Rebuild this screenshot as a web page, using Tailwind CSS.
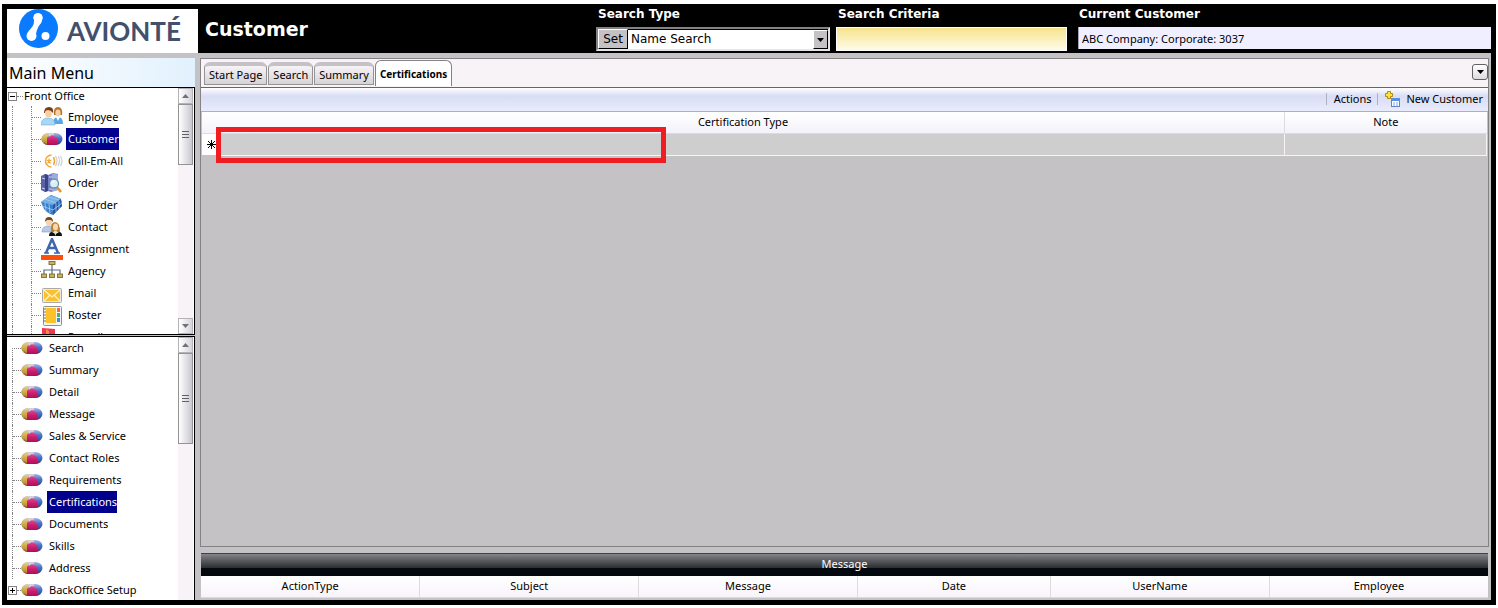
<!DOCTYPE html>
<html lang="en">
<head>
    <meta charset="UTF-8">
    <meta name="viewport" content="width=device-width, initial-scale=1.0">
    <title>Customer - Certifications</title>
    <script src="https://cdn.jsdelivr.net/npm/@tailwindcss/browser@4"></script>
</head>
<body class="bg-white font-['Noto_Sans',sans-serif] text-[11px] leading-4 text-black">
    <!-- Icon sprites -->
    <svg class="absolute size-0">
        <defs>
            <linearGradient id="gold" x1="0" y1="0" x2="0" y2="1"><stop offset="0" stop-color="#e8d8a8"/><stop offset=".5" stop-color="#d2a944"/><stop offset="1" stop-color="#a87f2c"/></linearGradient>
            <linearGradient id="pink" x1="0" y1="0" x2="0" y2="1"><stop offset="0" stop-color="#d94f8e"/><stop offset=".5" stop-color="#cc1a6d"/><stop offset="1" stop-color="#a80f50"/></linearGradient>
            <linearGradient id="blue" x1="0" y1="0" x2="0" y2="1"><stop offset="0" stop-color="#b9c6ea"/><stop offset=".45" stop-color="#4a72c8"/><stop offset="1" stop-color="#2b3f86"/></linearGradient>
            <clipPath id="pillClip"><rect x="0.500" y="5" width="21" height="12" rx="7" ry="6"/></clipPath>
        </defs>
        <symbol id="pill" viewBox="0 0 22 22">
            <g clip-path="url(#pillClip)">
                <rect x="0" y="4" width="22" height="14" fill="url(#blue)"/>
                <path d="M0 4h10L6 10v8H0z" fill="url(#gold)"/>
                <path d="M7 4h7l-2 4-4 2z" fill="#d9cdd8"/>
                <path d="M6 10l5-3 5 3 1 3-2 5H6z" fill="url(#pink)"/>
                <path d="M1 15l5 2v1H1z" fill="#8b2a52"/>
                <path d="M3 14q8 6 16 0v4H3z" fill="#8a1048" opacity=".35"/>
            </g>
        </symbol>
        <symbol id="people" viewBox="0 0 22 22">
            <path d="M12 18q0-7 5-7t5 7z" fill="#58a6e8"/>
            <path d="M13 9q-1-8 4-8t4 8z" fill="#b5762c"/>
            <ellipse cx="17" cy="7" rx="2.6" ry="3.4" fill="#f6cfa6"/>
            <path d="M15 11h4l-2 4z" fill="#fff"/>
            <path d="M0 19q0-7 7-7t7 7z" fill="#a9d6f3" stroke="#6fb2df" stroke-width=".6"/>
            <ellipse cx="7.500" cy="7" rx="3.300" ry="4.500" fill="#f6cfa6"/>
            <path d="M3 7Q3 1 8 1t4 6q-2-3-5-3T4 7z" fill="#7a3b16"/>
        </symbol>
        <symbol id="call" viewBox="0 0 22 22">
            <path d="M10.500 5A6 6 0 1 0 10.500 17M12.500 7q2 4 0 8" fill="none" stroke="#f6a733" stroke-width="1.500"/>
            <path d="M8 8.500v2.500M8 11l-2.500-1M8 11l2.500-1M8 11l-1.500 2.500M8 11l1.500 2.500" fill="none" stroke="#f6a733" stroke-width="1.200"/>
            <path d="M14.500 6q3 5 0 10M17 6q3 5 0 10M19.500 6q3 5 0 10" fill="none" stroke="#cfcfcf" stroke-width="1.200"/>
        </symbol>
        <symbol id="order" viewBox="0 0 22 22">
            <path d="M0 4l4-2 3 1v16l-3 1-4-2z" fill="#5a63a8"/><path d="M4 2l3 1v16l-3 1z" fill="#3b4385"/>
            <path d="M7 3l5-2 5 1v16l-7 2-3-1z" fill="#747dc2"/><path d="M11 1.500l6 1V18l-6 1.500z" fill="#a3aadd"/>
            <path d="M1 6l3 1M1 16l3 1M8 5h3M8 17h3" stroke="#cfd5f2"/>
            <path d="M16 15l4 5" stroke="#d9972d" stroke-width="2.500"/>
            <circle cx="13" cy="11.500" r="4.500" fill="#d5f0fb" stroke="#6b8fae" stroke-width="1.300"/>
            <path d="M11 11q1-2 3-2" fill="none" stroke="#fff"/>
        </symbol>
        <symbol id="cube" viewBox="0 0 22 22">
            <path d="M10 1l10 4 1 7-9 9q-6-2-9-6L0 8z" fill="#3b7fcb"/>
            <path d="M10 1l10 4-8 6L0 8z" fill="#76afe6"/><path d="M12 11l8-6 1 7-9 9z" fill="#2558a8"/>
            <path d="M4 5l11 4M7 3l11 3M4 9l1 8M8 10l1 9M15 9v9M18 7v8M1 12l11 4 9-7" stroke="#a8d0f3" stroke-width=".8" fill="none"/>
        </symbol>
        <symbol id="contact" viewBox="0 0 22 22">
            <path d="M1 16q0-6 6-6t6 6z" fill="#b9c8e6" stroke="#8799c2" stroke-width=".6"/>
            <ellipse cx="8" cy="6" rx="3" ry="4" fill="#f6d3ae"/><path d="M4 6q0-5 4-5t4 5l-2-2H6z" fill="#6e4a22"/>
            <path d="M10 16q-1-10 4-10t5 10z" fill="#b98432"/><ellipse cx="14.500" cy="11" rx="2.500" ry="3.500" fill="#f9d7b0"/>
            <path d="M8 20q0-4 3-4l3.500 2 3.500-2q3 0 3 4z" fill="#111"/><path d="M13 15h3l-1.500 5z" fill="#f9d7b0"/>
        </symbol>
        <symbol id="assign" viewBox="0 0 22 22">
            <path d="M5 15L11 1l6 14M7.500 10h8" fill="none" stroke="#3d66ae" stroke-width="2.500"/>
            <path d="M3 15h5M13 15h6" stroke="#3d66ae" stroke-width="1.500"/>
            <rect y="17" width="22" height="5" fill="#fb4f0a"/>
        </symbol>
        <symbol id="agency" viewBox="0 0 22 22">
            <path d="M11 5v11M3 14v-4h16v4" stroke="#5b6b8c" fill="none" stroke-width="1.200"/>
            <g fill="#cbb35c" stroke="#7a6a35" stroke-width=".9"><rect x="8" y="1.500" width="6" height="3"/><rect x=".5" y="14" width="5" height="3.500"/><rect x="8.500" y="14" width="5" height="3.500"/><rect x="16.500" y="14" width="5" height="3.500"/></g>
        </symbol>
        <symbol id="email" viewBox="0 0 22 22">
            <rect x="1.500" y="6.500" width="19" height="14" rx="1" fill="#e9e9e9" stroke="#a9a9a9"/>
            <rect x="3" y="8" width="16" height="11" fill="#fbc02c"/>
            <path d="M3 8l8 7 8-7M3 19l6-6M19 19l-6-6" fill="none" stroke="#fff3c4" stroke-width="1.300"/>
        </symbol>
        <symbol id="roster" viewBox="0 0 22 22">
            <rect x="2.500" y="2.500" width="18" height="19" rx="1" fill="#f4f4f4" stroke="#8f8f8f"/>
            <rect x="5" y="4" width="10" height="15" fill="#fdc22b"/>
            <path d="M2 5h3M2 8h3M2 11h3M2 14h3M2 17h3" stroke="#777"/>
            <path d="M16 4h3v4h-3z" fill="#f26c3a"/><path d="M16 9h3v4h-3z" fill="#4fb648"/><path d="M16 14h3v4h-3z" fill="#2f8fe0"/>
        </symbol>
        <symbol id="payroll" viewBox="0 0 22 22"><path d="M1 2l13 1v17H1z" fill="#f0355c"/><path d="M5 3l3 2v14H5z" fill="#f98a3c"/></symbol>
    </svg>

    <div class="flex h-screen min-h-[608px] flex-col px-[2px] pt-1 pb-[3px]">
        <div class="flex min-h-0 flex-1 flex-col border-x-[5px] border-b-[5px] border-black bg-[#c5c2c5]">
            <!-- Header -->
            <header class="flex h-[49px] shrink-0 bg-black font-['DejaVu_Sans',sans-serif]">
                <div class="mt-[5px] flex w-[191px] shrink-0 items-center bg-white pl-3">
                    <svg class="-mt-[4px] size-10 shrink-0" viewBox="0 0 40 40">
                        <circle cx="19.500" cy="19.500" r="19.500" fill="#0a7bff"/>
                        <path d="M14.500 8h9q0 5-3 8-3 4-4 12l-8 1q-1-6 3-9 5-5 3-12z" fill="#fff"/>
                        <circle cx="19" cy="8.500" r="4.600" fill="#fff"/><circle cx="12.500" cy="27" r="5" fill="#fff"/><circle cx="26.500" cy="27" r="4" fill="#fff"/>
                    </svg>
                    <span class="ml-2 font-['Lato',sans-serif] text-[26px] leading-8 font-bold text-[#43506c]">AVIONTÉ</span>
                </div>
                <h1 class="w-[398px] shrink-0 pt-[9px] pl-[7px] text-[19px] leading-8 font-bold text-white">Customer</h1>
                <div class="w-[234px] shrink-0 pt-[2px]">
                    <label for="searchType" class="block h-[21px] pl-[2px] text-[12px] leading-[17px] font-bold text-white">Search Type</label>
                    <div class="flex h-6 border-2 border-t-[#848284] border-r-[#e7e3e7] border-b-[#e7e3e7] border-l-[#848284] bg-white text-[12px]">
                        <button type="button" class="w-[30px] border border-t-white border-r-black border-b-black border-l-white bg-[#c5c2c5]">Set</button>
                        <div class="relative flex-1">
                            <select id="searchType" class="h-full w-full appearance-none border-t border-black pb-px pl-[3px]"><option>Name Search</option></select>
                            <span class="pointer-events-none absolute top-px right-0 flex h-[19px] w-[15px] items-center justify-center border border-t-white border-r-black border-b-black border-l-white bg-[#c5c2c5]">
                                <svg class="h-1 w-[7px]" viewBox="0 0 7 4"><path d="M0 0h7L3.500 4z"/></svg>
                            </span>
                        </div>
                    </div>
                </div>
                <div class="ml-[6px] w-[231px] shrink-0 pt-[2px]">
                    <label for="criteria" class="block h-[21px] pl-[2px] text-[12px] leading-[17px] font-bold text-white">Search Criteria</label>
                    <input id="criteria" type="text" class="block h-6 w-full border border-white bg-linear-to-b from-[#f7e38c] to-[#fffbe7] px-1 text-[12px]">
                </div>
                <div class="ml-[11px] min-w-0 flex-1 pt-[2px]">
                    <label for="current" class="block h-[21px] pl-px text-[12px] leading-4 font-bold text-white">Current Customer</label>
                    <input id="current" type="text" readonly value="ABC Company: Corporate: 3037" class="block h-[22px] w-full border-l border-[#a5a2b5] bg-[#efefff] pl-[3px] font-['Noto_Sans',sans-serif] text-[11px]">
                </div>
            </header>

            <div class="flex min-h-0 flex-1 pt-[5px]">
                <!-- Navigation -->
                <aside class="flex w-[188px] shrink-0 flex-col">
                    <h2 class="h-[29px] shrink-0 bg-linear-to-r from-white to-[#e1f1fd] pl-[2px] text-[16px] leading-[30px]">Main Menu</h2>
                    <nav class="flex h-[248px] shrink-0 border-y border-r border-black bg-white">
                        <ul class="min-w-0 flex-1 overflow-hidden">
                            <li class="flex h-[18px] items-center pb-[2px]">
                                <button type="button" aria-label="Collapse" class="ml-px flex size-[9px] items-center justify-center border border-[#848284]"><span class="h-px w-[5px] bg-black"></span></button>
                                <span class="w-[6px] border-t border-dotted border-[#848284]"></span>
                                <span class="pl-px">Front Office</span>
                            </li>
                            <li class="ml-[5px] flex h-[22px] items-center border-l border-dotted border-[#848284] pl-[18px]"><span class="flex h-full w-[10px] items-center border-l border-dotted border-[#848284]"><span class="w-full border-t border-dotted border-[#848284]"></span></span><svg class="size-[22px]"><use href="#people"/></svg><a href="#" class="ml-[3px] px-[2px] leading-[22px]">Employee</a></li>
                            <li class="ml-[5px] flex h-[22px] items-center border-l border-dotted border-[#848284] pl-[18px]"><span class="flex h-full w-[10px] items-center border-l border-dotted border-[#848284]"><span class="w-full border-t border-dotted border-[#848284]"></span></span><svg class="size-[22px]"><use href="#pill"/></svg><a href="#" class="ml-[3px] bg-[#00008c] pl-[2px] leading-[22px] text-white">Customer</a></li>
                            <li class="ml-[5px] flex h-[22px] items-center border-l border-dotted border-[#848284] pl-[18px]"><span class="flex h-full w-[10px] items-center border-l border-dotted border-[#848284]"><span class="w-full border-t border-dotted border-[#848284]"></span></span><svg class="size-[22px]"><use href="#call"/></svg><a href="#" class="ml-[3px] px-[2px] leading-[22px]">Call-Em-All</a></li>
                            <li class="ml-[5px] flex h-[22px] items-center border-l border-dotted border-[#848284] pl-[18px]"><span class="flex h-full w-[10px] items-center border-l border-dotted border-[#848284]"><span class="w-full border-t border-dotted border-[#848284]"></span></span><svg class="size-[22px]"><use href="#order"/></svg><a href="#" class="ml-[3px] px-[2px] leading-[22px]">Order</a></li>
                            <li class="ml-[5px] flex h-[22px] items-center border-l border-dotted border-[#848284] pl-[18px]"><span class="flex h-full w-[10px] items-center border-l border-dotted border-[#848284]"><span class="w-full border-t border-dotted border-[#848284]"></span></span><svg class="size-[22px]"><use href="#cube"/></svg><a href="#" class="ml-[3px] px-[2px] leading-[22px]">DH Order</a></li>
                            <li class="ml-[5px] flex h-[22px] items-center border-l border-dotted border-[#848284] pl-[18px]"><span class="flex h-full w-[10px] items-center border-l border-dotted border-[#848284]"><span class="w-full border-t border-dotted border-[#848284]"></span></span><svg class="size-[22px]"><use href="#contact"/></svg><a href="#" class="ml-[3px] px-[2px] leading-[22px]">Contact</a></li>
                            <li class="ml-[5px] flex h-[22px] items-center border-l border-dotted border-[#848284] pl-[18px]"><span class="flex h-full w-[10px] items-center border-l border-dotted border-[#848284]"><span class="w-full border-t border-dotted border-[#848284]"></span></span><svg class="size-[22px]"><use href="#assign"/></svg><a href="#" class="ml-[3px] px-[2px] leading-[22px]">Assignment</a></li>
                            <li class="ml-[5px] flex h-[22px] items-center border-l border-dotted border-[#848284] pl-[18px]"><span class="flex h-full w-[10px] items-center border-l border-dotted border-[#848284]"><span class="w-full border-t border-dotted border-[#848284]"></span></span><svg class="size-[22px]"><use href="#agency"/></svg><a href="#" class="ml-[3px] px-[2px] leading-[22px]">Agency</a></li>
                            <li class="ml-[5px] flex h-[22px] items-center border-l border-dotted border-[#848284] pl-[18px]"><span class="flex h-full w-[10px] items-center border-l border-dotted border-[#848284]"><span class="w-full border-t border-dotted border-[#848284]"></span></span><svg class="size-[22px]"><use href="#email"/></svg><a href="#" class="ml-[3px] px-[2px] leading-[22px]">Email</a></li>
                            <li class="ml-[5px] flex h-[22px] items-center border-l border-dotted border-[#848284] pl-[18px]"><span class="flex h-full w-[10px] items-center border-l border-dotted border-[#848284]"><span class="w-full border-t border-dotted border-[#848284]"></span></span><svg class="size-[22px]"><use href="#roster"/></svg><a href="#" class="ml-[3px] px-[2px] leading-[22px]">Roster</a></li>
                            <li class="ml-[5px] flex h-[22px] items-center border-l border-dotted border-[#848284] pl-[18px]"><span class="flex h-full w-[10px] items-center border-l border-dotted border-[#848284]"><span class="w-full border-t border-dotted border-[#848284]"></span></span><svg class="size-[22px]"><use href="#payroll"/></svg><a href="#" class="ml-[3px] px-[2px] leading-[22px]">Payroll</a></li>
                        </ul>
                        <div class="mr-px flex w-[15px] shrink-0 flex-col bg-[#f7f3f7]">
                            <button type="button" aria-label="Scroll up" class="flex h-4 items-center justify-center border border-[#b5b2b5] bg-linear-to-r from-white to-[#d6d3de]"><svg class="h-1 w-[7px]" viewBox="0 0 7 4"><path d="M0 4h7L3.500 0z" fill="#737173"/></svg></button>
                            <div class="flex h-[61px] items-center justify-center border border-[#949294] bg-linear-to-r from-white to-[#c9c8d2]"><span class="h-2 w-[7px] bg-[repeating-linear-gradient(#636163_0_1px,transparent_1px_3px)]"></span></div>
                            <button type="button" aria-label="Scroll down" class="mt-auto flex h-4 items-center justify-center border border-[#b5b2b5] bg-linear-to-r from-white to-[#d6d3de]"><svg class="h-1 w-[7px]" viewBox="0 0 7 4"><path d="M0 0h7L3.500 4z" fill="#737173"/></svg></button>
                        </div>
                    </nav>
                    <nav class="mt-px flex min-h-0 flex-1 border-t border-r border-black bg-white">
                        <ul class="min-w-0 flex-1 overflow-hidden">
                            <li class="flex h-[22px] items-center pl-[5px]"><span class="h-[11px] w-[9px] self-end border-t border-l border-dotted border-[#848284]"></span><svg class="size-[22px]"><use href="#pill"/></svg><a href="#" class="ml-[4px] px-[2px] leading-[22px]">Search</a></li>
                            <li class="ml-[5px] flex h-[22px] items-center border-l border-dotted border-[#848284]"><span class="w-2 border-t border-dotted border-[#848284]"></span><svg class="size-[22px]"><use href="#pill"/></svg><a href="#" class="ml-[4px] px-[2px] leading-[22px]">Summary</a></li>
                            <li class="ml-[5px] flex h-[22px] items-center border-l border-dotted border-[#848284]"><span class="w-2 border-t border-dotted border-[#848284]"></span><svg class="size-[22px]"><use href="#pill"/></svg><a href="#" class="ml-[4px] px-[2px] leading-[22px]">Detail</a></li>
                            <li class="ml-[5px] flex h-[22px] items-center border-l border-dotted border-[#848284]"><span class="w-2 border-t border-dotted border-[#848284]"></span><svg class="size-[22px]"><use href="#pill"/></svg><a href="#" class="ml-[4px] px-[2px] leading-[22px]">Message</a></li>
                            <li class="ml-[5px] flex h-[22px] items-center border-l border-dotted border-[#848284]"><span class="w-2 border-t border-dotted border-[#848284]"></span><svg class="size-[22px]"><use href="#pill"/></svg><a href="#" class="ml-[4px] px-[2px] leading-[22px]">Sales &amp; Service</a></li>
                            <li class="ml-[5px] flex h-[22px] items-center border-l border-dotted border-[#848284]"><span class="w-2 border-t border-dotted border-[#848284]"></span><svg class="size-[22px]"><use href="#pill"/></svg><a href="#" class="ml-[4px] px-[2px] leading-[22px]">Contact Roles</a></li>
                            <li class="ml-[5px] flex h-[22px] items-center border-l border-dotted border-[#848284]"><span class="w-2 border-t border-dotted border-[#848284]"></span><svg class="size-[22px]"><use href="#pill"/></svg><a href="#" class="ml-[4px] px-[2px] leading-[22px]">Requirements</a></li>
                            <li class="ml-[5px] flex h-[22px] items-center border-l border-dotted border-[#848284]"><span class="w-2 border-t border-dotted border-[#848284]"></span><svg class="size-[22px]"><use href="#pill"/></svg><a href="#" class="ml-[4px] bg-[#00008c] pl-[2px] leading-[22px] text-white">Certifications</a></li>
                            <li class="ml-[5px] flex h-[22px] items-center border-l border-dotted border-[#848284]"><span class="w-2 border-t border-dotted border-[#848284]"></span><svg class="size-[22px]"><use href="#pill"/></svg><a href="#" class="ml-[4px] px-[2px] leading-[22px]">Documents</a></li>
                            <li class="ml-[5px] flex h-[22px] items-center border-l border-dotted border-[#848284]"><span class="w-2 border-t border-dotted border-[#848284]"></span><svg class="size-[22px]"><use href="#pill"/></svg><a href="#" class="ml-[4px] px-[2px] leading-[22px]">Skills</a></li>
                            <li class="ml-[5px] flex h-[22px] items-center border-l border-dotted border-[#848284]"><span class="w-2 border-t border-dotted border-[#848284]"></span><svg class="size-[22px]"><use href="#pill"/></svg><a href="#" class="ml-[4px] px-[2px] leading-[22px]">Address</a></li>
                            <li class="flex h-[22px] items-center pl-px">
                                <button type="button" aria-label="Expand" class="flex size-[9px] items-center justify-center border border-[#848284]"><svg class="size-[7px]" viewBox="0 0 7 7"><path d="M1 3h5v1H1zM3 1h1v5H3z"/></svg></button>
                                <span class="w-1 border-t border-dotted border-[#848284]"></span><svg class="size-[22px]"><use href="#pill"/></svg><a href="#" class="ml-[4px] px-[2px] leading-[22px]">BackOffice Setup</a>
                            </li>
                        </ul>
                        <div class="mr-px flex w-[15px] shrink-0 flex-col bg-[#f7f3f7]">
                            <button type="button" aria-label="Scroll up" class="flex h-4 items-center justify-center border border-[#b5b2b5] bg-linear-to-r from-white to-[#d6d3de]"><svg class="h-1 w-[7px]" viewBox="0 0 7 4"><path d="M0 4h7L3.500 0z" fill="#737173"/></svg></button>
                            <div class="flex h-[91px] items-center justify-center border border-[#949294] bg-linear-to-r from-white to-[#c9c8d2]"><span class="h-2 w-[7px] bg-[repeating-linear-gradient(#636163_0_1px,transparent_1px_3px)]"></span></div>
                        </div>
                    </nav>
                </aside>

                <!-- Content -->
                <main class="ml-[5px] flex min-w-0 flex-1 flex-col pr-[2px]">
                    <section class="flex min-h-0 flex-1 flex-col border border-[#848284]">
                        <div class="flex h-[29px] shrink-0 items-end border-b border-[#636573] bg-[#f7f3f7] pl-[3px]">
                            <div role="tablist" class="flex h-full items-end gap-px">
                                <button type="button" role="tab" class="mb-[2px] h-[23px] rounded-t-md border border-t-4 border-[#949294] border-t-[#c5c2c5] bg-linear-to-b from-[#f7f3f7] to-[#d6d3d6] px-[4px]">Start Page</button>
                                <button type="button" role="tab" class="mb-[2px] h-[23px] rounded-t-md border border-t-4 border-[#949294] border-t-[#c5c2c5] bg-linear-to-b from-[#f7f3f7] to-[#d6d3d6] px-[4px]">Search</button>
                                <button type="button" role="tab" class="mb-[2px] h-[23px] rounded-t-md border border-t-4 border-[#949294] border-t-[#c5c2c5] bg-linear-to-b from-[#f7f3f7] to-[#d6d3d6] px-[4px]">Summary</button>
                                <button type="button" role="tab" aria-selected="true" class="mb-px h-[26px] rounded-t-md border border-b-0 border-[#848284] bg-white px-[4px] text-[10px] font-bold">Certifications</button>
                            </div>
                            <button type="button" aria-label="Tab list" class="mb-[7px] ml-auto flex size-4 items-center justify-center rounded-[3px] border border-[#636163] bg-linear-to-b from-white to-[#deDBde]"><svg class="h-1 w-[7px]" viewBox="0 0 7 4"><path d="M0 0h7L3.500 4z"/></svg></button>
                        </div>
                        <div class="flex h-6 shrink-0 items-center justify-end border-b border-[#adaecb] bg-linear-to-b from-white via-[#d9ddf4] via-35% to-[#e9ecfd] pr-[5px] pb-px">
                            <span class="mr-[7px] h-3 w-px bg-[#b0b0c0]"></span>
                            <button type="button">Actions</button>
                            <span class="mx-[6px] h-3 w-px bg-[#b0b0c0]"></span>
                            <button type="button" class="flex items-center gap-[6px]">
                                <svg class="size-4" viewBox="0 0 16 16"><path d="M3.500.5h3v2h2v3h-2v2h-3v-2h-2v-3h2z" fill="#ffe23a" stroke="#b08a10"/><rect x="7.500" y="7.500" width="8" height="8" fill="#fff" stroke="#5d86cc"/><path d="M7 7h9v3H7z" fill="#5b8fe0"/><path d="M9 12h2M12 12h2M9 14h2M12 14h2" stroke="#7aa5e8"/></svg>
                                New Customer
                            </button>
                        </div>
                        <div class="relative min-h-0 flex-1 px-px">
                            <table class="w-full table-fixed border-collapse">
                                <colgroup><col class="w-[15px]"><col><col class="w-[202px]"></colgroup>
                                <thead>
                                    <tr class="h-[21px] bg-linear-to-b from-white to-[#f4f2fa]">
                                        <th colspan="2" class="border-r border-b border-[#dedbde] p-0 font-normal">Certification Type</th>
                                        <th class="border-b border-[#dedbde] p-0 font-normal">Note</th>
                                    </tr>
                                </thead>
                                <tbody>
                                    <tr class="h-[22px] bg-[#cecece]">
                                        <td class="bg-white p-0">
                                            <svg class="ml-[5px] size-[9px]" viewBox="0 0 9 9"><path d="M4.500 0v9M0 4.500h9M1 1l7 7M8 1L1 8" stroke="#000"/></svg>
                                        </td>
                                        <td class="border-r border-b border-[#f7f3f7] p-0"></td>
                                        <td class="border-r border-b border-[#f7f3f7] p-0"></td>
                                    </tr>
                                </tbody>
                            </table>
                            <!-- Highlight over the new row -->
                            <div class="absolute top-[15px] left-[15px] h-9 w-[450px] border-[5px] border-[#ef1c21]"></div>
                        </div>
                    </section>
                    <section class="mt-[6px] mr-px mb-[2px] ml-px shrink-0">
                        <h3 class="h-[23px] border-t border-[#424142] bg-linear-to-b from-[#85868b] via-[#2b2d31] via-64% to-[#02080e] to-66% text-center leading-5 text-white">Message</h3>
                        <table class="w-full table-fixed border-collapse bg-linear-to-b from-white to-[#f7f3fb]">
                            <thead>
                                <tr class="h-[22px]">
                                    <th class="w-[17%] border-r border-b border-[#dedbde] p-0 font-normal">ActionType</th>
                                    <th class="w-[17%] border-r border-b border-[#dedbde] p-0 font-normal">Subject</th>
                                    <th class="w-[17%] border-r border-b border-[#dedbde] p-0 font-normal">Message</th>
                                    <th class="border-r border-b border-[#dedbde] p-0 font-normal">Date</th>
                                    <th class="w-[17%] border-r border-b border-[#dedbde] p-0 font-normal">UserName</th>
                                    <th class="w-[17%] border-b border-[#dedbde] p-0 font-normal">Employee</th>
                                </tr>
                            </thead>
                        </table>
                    </section>
                </main>
            </div>
        </div>
    </div>
</body>
</html>
